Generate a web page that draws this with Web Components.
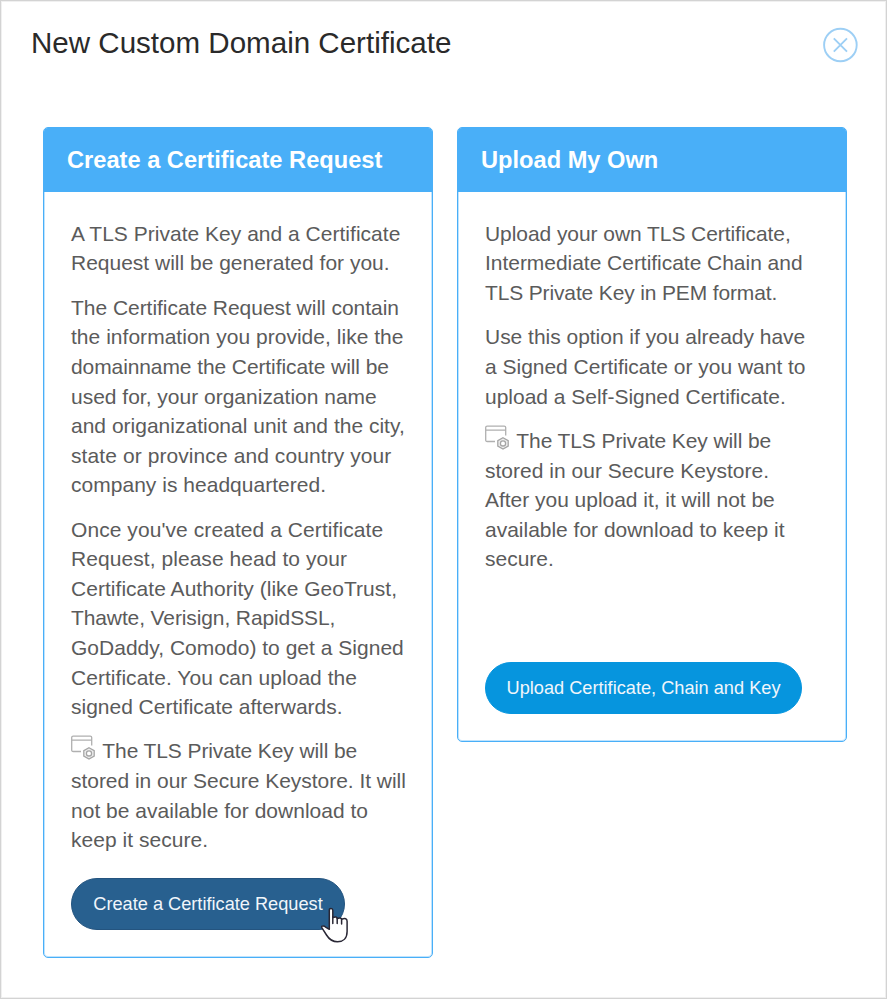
<!DOCTYPE html>
<html lang="en">
<head>
<meta charset="utf-8">
<title>New Custom Domain Certificate</title>
<style>
html,body{margin:0;height:100%;background:#fff}
body{font-family:"Liberation Sans",Arial,sans-serif;overflow:hidden}
</style>
</head>
<body>
<certificate-dialog heading="New Custom Domain Certificate">
  <option-card heading="Create a Certificate Request" style="height:831px">
    <text-block>
      <text-line style="letter-spacing:.03px">A TLS Private Key and a Certificate</text-line>
      <text-line style="letter-spacing:.01px">Request will be generated for you.</text-line>
    </text-block>
    <text-block>
      <text-line style="letter-spacing:-.02px">The Certificate Request will contain</text-line>
      <text-line style="letter-spacing:.04px">the information you provide, like the</text-line>
      <text-line style="letter-spacing:-.08px">domainname the Certificate will be</text-line>
      <text-line style="letter-spacing:.01px">used for, your organization name</text-line>
      <text-line style="letter-spacing:.02px">and origanizational unit and the city,</text-line>
      <text-line style="letter-spacing:.1px">state or province and country your</text-line>
      <text-line style="letter-spacing:.04px">company is headquartered.</text-line>
    </text-block>
    <text-block>
      <text-line style="letter-spacing:.085px">Once you've created a Certificate</text-line>
      <text-line style="letter-spacing:.075px">Request, please head to your</text-line>
      <text-line style="letter-spacing:.047px">Certificate Authority (like GeoTrust,</text-line>
      <text-line style="letter-spacing:-.1px">Thawte, Verisign, RapidSSL,</text-line>
      <text-line style="letter-spacing:.03px">GoDaddy, Comodo) to get a Signed</text-line>
      <text-line style="letter-spacing:.05px">Certificate. You can upload the</text-line>
      <text-line style="letter-spacing:0">signed Certificate afterwards.</text-line>
    </text-block>
    <text-block>
      <text-line style="letter-spacing:-.09px"><keystore-icon></keystore-icon> The TLS Private Key will be</text-line>
      <text-line style="letter-spacing:-.02px">stored in our Secure Keystore. It will</text-line>
      <text-line style="letter-spacing:.03px">not be available for download to</text-line>
      <text-line style="letter-spacing:.05px">keep it secure.</text-line>
    </text-block>
    <pill-button slot="action" style="--w:273.5px">Create a Certificate Request<hand-cursor slot="pointer"></hand-cursor></pill-button>
  </option-card>
  <option-card heading="Upload My Own" style="height:615px">
    <text-block>
      <text-line style="letter-spacing:-.05px">Upload your own TLS Certificate,</text-line>
      <text-line style="letter-spacing:-.02px">Intermediate Certificate Chain and</text-line>
      <text-line style="letter-spacing:-.13px">TLS Private Key in PEM format.</text-line>
    </text-block>
    <text-block>
      <text-line style="letter-spacing:-.01px">Use this option if you already have</text-line>
      <text-line>a Signed Certificate or you want to</text-line>
      <text-line style="letter-spacing:0">upload a Self-Signed Certificate.</text-line>
    </text-block>
    <text-block>
      <text-line style="letter-spacing:-.09px"><keystore-icon></keystore-icon> The TLS Private Key will be</text-line>
      <text-line style="letter-spacing:.03px">stored in our Secure Keystore.</text-line>
      <text-line style="letter-spacing:-.015px">After you upload it, it will not be</text-line>
      <text-line>available for download to keep it</text-line>
      <text-line style="letter-spacing:0">secure.</text-line>
    </text-block>
    <pill-button slot="action" style="--w:316.5px;--bg:#0695de;--edge:#0695de">Upload Certificate, Chain and Key</pill-button>
  </option-card>
</certificate-dialog>
<script>
const define = (name, html) => customElements.define(name, class extends HTMLElement {
  constructor() {
    super();
    const t = document.createElement('template');
    t.innerHTML = html;
    this.attachShadow({mode: 'open'}).append(t.content.cloneNode(true));
  }
  connectedCallback() {
    const h = this.shadowRoot.querySelector('[data-heading]');
    if (h) h.textContent = this.getAttribute('heading');
  }
});

define('close-icon', `<style>:host{display:block;width:36px;height:36px}svg{display:block}</style>
<svg width="36" height="36" viewBox="0 0 36 36" fill="none" stroke="#9dcff5" stroke-width="1.9"><circle cx="17.400" cy="18" r="16.300"/><path d="M10.800 11.400l13.200 13.200M24 11.400L10.800 24.600"/></svg>`);

define('keystore-icon', `<style>:host{display:inline-block;width:25px;height:25px;margin:-6px 1px -6px 0;vertical-align:4px;line-height:0}svg{display:block}</style>
<svg width="25" height="25" viewBox="0 0 25 25" fill="none" stroke="#b0b0b0" stroke-width="1.300"><path d="M10 16.500H2.200Q.7 16.500.7 15V2.600Q.7 1.100 2.200 1.100h17Q20.700 1.100 20.700 2.600V10.500M.7 5.200h20"/><path fill="#eee" stroke="#a5a5a5" stroke-width="1.300" d="M18 12.800l5.200 2.900v5.400L18 24l-5.200-2.900v-5.400z"/><circle cx="18" cy="18.400" r="2.600" stroke="#a5a5a5" fill="#fff"/></svg>`);

define('hand-cursor', `<style>:host{display:block;position:absolute;left:249px;top:29px;width:30px;height:37px}svg{display:block}</style>
<svg width="30" height="37" viewBox="0 0 30 37" fill="#fff" stroke="#292735" stroke-width="1.500" stroke-linejoin="round" stroke-linecap="round"><path d="M9.300 22.300V3.200Q9.300 1.400 11 1.400T12.800 3.200V10.500Q16.800 8.900 17.200 11.600Q20.800 9.900 21.600 12.300Q26.900 10.300 27.100 14.200V24.500C27.100 31.400 23 34.800 17.500 34.800C11.500 34.800 8.600 31.400 6.500 28L2.100 21.200Q.900 19 2.900 19Q4.300 18.900 6 20.300z"/><path fill="none" d="M12.800 10.500v6M17.200 11.600v5M21.600 12.300v4.600"/></svg>`);

define('text-line', `<style>:host{display:block;white-space:nowrap;height:29.580px;line-height:29.580px}</style><slot></slot>`);
define('text-block', `<style>:host{display:block;color:#5b5b5b;font-size:20.980px}</style><slot></slot>`);

define('pill-button', `<style>:host{display:block;position:relative;width:var(--w)}
button{all:unset;box-sizing:border-box;display:flex;align-items:center;justify-content:center;width:100%;height:51.500px;padding:1.500px 0 0 .5px;border-radius:26px;background:var(--bg,#28608f);border:1px solid var(--edge,#24547f);color:#f1f6fb;font-size:18.200px;white-space:nowrap}</style>
<button><slot></slot></button><slot name="pointer"></slot>`);

define('option-card', `<style>:host{box-sizing:border-box;width:390px;display:flex;flex-direction:column;border:1px solid #49aff8;border-radius:5px;box-shadow:inset 0 0 0 1px rgba(73,175,248,.35);overflow:hidden}
h2{margin:0;height:64px;flex:none;background:#49aff8;color:#fff;font-size:23.650px;line-height:64px;padding-left:23px;white-space:nowrap}
section{flex:1;display:flex;flex-direction:column;gap:14.790px;padding:26.900px 0 27.500px 27px}
slot[name=action]{display:block;margin-top:auto}</style>
<h2 data-heading></h2><section><slot></slot><slot name="action"></slot></section>`);

define('certificate-dialog', `<style>:host{box-sizing:border-box;width:887px;height:999px;display:flex;flex-direction:column;background:#fff;border:1px solid #d3d3d3;box-shadow:inset 0 0 0 1px #f0f0f0}
header{display:flex;justify-content:space-between;align-items:flex-start;height:126px;box-sizing:border-box;padding:25px 27px 0 30px}
h1{margin:0;font-size:29.560px;line-height:34px;font-weight:400;color:#2a2a2a;white-space:nowrap}
close-icon{margin-top:1px}
main{display:flex;gap:24px;align-items:flex-start;padding-left:42px}</style>
<header><h1 data-heading></h1><close-icon></close-icon></header><main><slot></slot></main>`);
</script>
</body>
</html>
